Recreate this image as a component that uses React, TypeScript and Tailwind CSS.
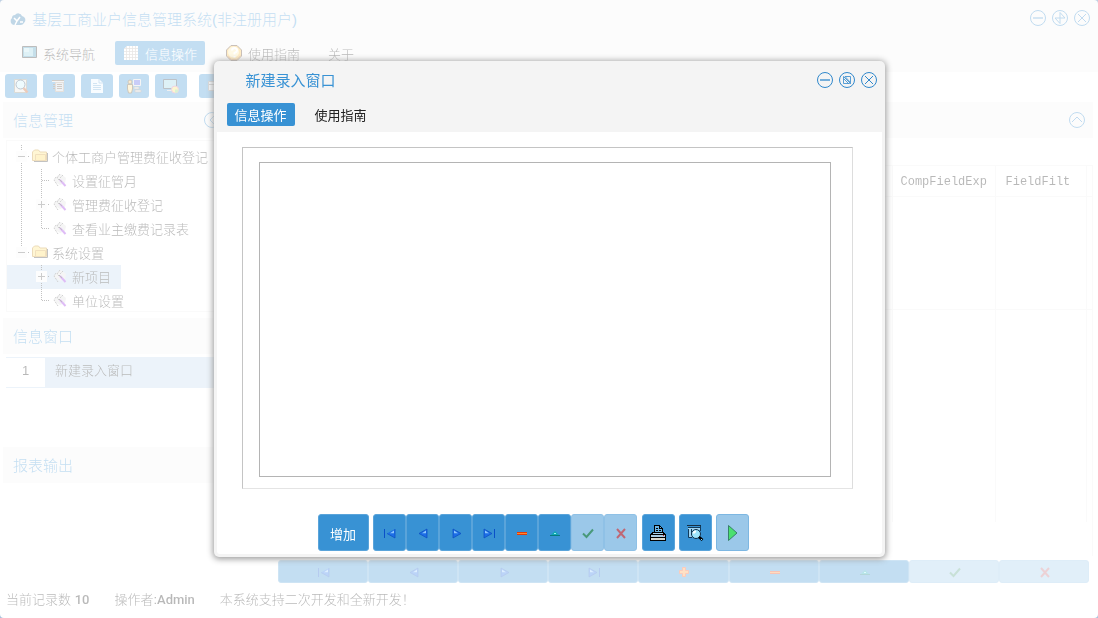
import { useState } from 'react'
import type { ReactNode } from 'react'
import clsx from 'clsx'

type NavKind = 'first' | 'prev' | 'next' | 'last' | 'insert' | 'delete' | 'edit' | 'post' | 'cancel'

const NAV_LABELS: Record<NavKind, string> = {
  first: '首记录',
  prev: '上一记录',
  next: '下一记录',
  last: '末记录',
  insert: '插入',
  delete: '删除',
  edit: '编辑',
  post: '提交',
  cancel: '取消',
}

const PAGE_NAV: NavKind[] = ['first', 'prev', 'next', 'last', 'insert', 'delete', 'edit', 'post', 'cancel']
const FORM_NAV: NavKind[] = ['first', 'prev', 'next', 'last', 'delete', 'edit', 'post', 'cancel']

function NavIcon({ kind }: { kind: NavKind }) {
  return (
    <svg width="16" height="16" viewBox="0 0 16 16" fill="none" aria-hidden="true">
      {kind === 'first' && <><path d="M2.500 4v9" stroke="#0a50c8" /><path d="M13 4v9L5 8.500z" fill="#1c6ee6" /><path d="M13 4v9L5 8.500" stroke="#0a4cc0" strokeWidth=".7" /><path d="M12 5.500L8 8.300h4z" fill="#8cc8ff" /></>}
      {kind === 'prev' && <><path d="M12 4v9L4 8.500z" fill="#1c6ee6" stroke="#0a4cc0" strokeWidth=".7" /><path d="M11 5.500L7 8.300h4z" fill="#8cc8ff" /></>}
      {kind === 'next' && <><path d="M5 4v9l8-4.500z" fill="#1c6ee6" stroke="#0a4cc0" strokeWidth=".7" /><path d="M6 5.500L10 8.300H6z" fill="#8cc8ff" /></>}
      {kind === 'last' && <><path d="M13.500 4v9" stroke="#0a50c8" /><path d="M3 4v9l8-4.500z" fill="#1c6ee6" stroke="#0a4cc0" strokeWidth=".7" /><path d="M4 5.500L8 8.300H4z" fill="#8cc8ff" /></>}
      {kind === 'insert' && <path d="M6.500 3.500h3v3h3v3h-3v3h-3v-3h-3v-3h3z" fill="#ff9a3c" stroke="#f2501e" />}
      {kind === 'delete' && <><path d="M3 7h10v3H3z" fill="#e03a0c" /><path d="M3 8h10v1H3z" fill="#ff8a2c" /></>}
      {kind === 'edit' && <><path d="M3 11l5-5 5 5z" fill="#10a8b4" /><path d="M3 10.500h10" stroke="#087a80" /><path d="M7 8h2v1H7z" fill="#9df2f2" /></>}
      {kind === 'post' && <path d="M3 8.500L6.500 12 13 4.500" stroke="#137a32" strokeWidth="2" />}
      {kind === 'cancel' && <path d="M4 4l8 9M12 4l-8 9" stroke="#d82828" strokeWidth="2" />}
    </svg>
  )
}

function Navigator({ kinds, className }: { kinds: NavKind[]; className: string }) {
  return (
    <>
      {kinds.map((kind) => {
        const disabled = kind === 'post' || kind === 'cancel'
        return (
          <button
            key={kind}
            type="button"
            aria-label={NAV_LABELS[kind]}
            disabled={disabled}
            className={clsx(
              'flex items-center justify-center rounded-[3px] border',
              disabled ? 'border-[#8fc1e6] bg-[#9bc8e9]' : 'border-[#5aa4da] bg-[#3892d4]',
              className,
            )}
          >
            <span className={clsx('pl-0.5', disabled && 'opacity-60')}><NavIcon kind={kind} /></span>
          </button>
        )
      })}
    </>
  )
}

function CircleButton({ label, children }: { label: string; children: ReactNode }) {
  return (
    <button type="button" aria-label={label} className="size-4 text-[#3088cc]">
      <svg width="16" height="16" viewBox="0 0 16 16" fill="none" stroke="currentColor" aria-hidden="true">
        <circle cx="8" cy="8" r="7.500" />
        {children}
      </svg>
    </button>
  )
}

function WindowControls({ middle }: { middle: ReactNode }) {
  return (
    <div className="flex gap-1.5">
      <CircleButton label="最小化"><path d="M3 8h10" strokeWidth="1.300" /></CircleButton>
      <CircleButton label="最大化">{middle}</CircleButton>
      <CircleButton label="关闭"><path d="M4 4l8 8M12 4l-8 8" /></CircleButton>
    </div>
  )
}

function MonitorIcon() {
  return (
    <svg width="16" height="16" viewBox="0 0 16 16" aria-hidden="true">
      <path d="M.5 1.500h14v11H.5z" fill="#3f95b8" stroke="#222" />
      <path d="M2 3h9v8H2z" fill="#8fcfe2" />
      <path d="M2 3h5v4H2z" fill="#b7e3ee" />
    </svg>
  )
}

function GridIcon() {
  return (
    <svg width="16" height="16" viewBox="0 0 16 16" aria-hidden="true">
      <path d="M4 1h11v14H1V4z" fill="#fff" />
      <path d="M1 3.500h14M1 6.500h14M1 9.500h14M1 12.500h14M3.500 1v14M6.500 1v14M9.500 1v14M12.500 1v14" stroke="#b4b0ac" strokeWidth=".8" />
    </svg>
  )
}

function HelpIcon() {
  return (
    <svg width="18" height="18" viewBox="0 0 18 18" aria-hidden="true">
      <path d="M6 1.500h6l4.500 4.500v6L12 16.500H6L1.500 12V6z" fill="#ffbe3c" stroke="#4a2c18" />
      <circle cx="8.500" cy="8" r="5.500" fill="#ffe9a8" />
      <path d="M7 6.500Q7 4 9.500 4T12 6.500Q12 8 9.500 9v1.500M9.500 12v1.500" fill="none" stroke="#fff" strokeWidth="2" />
      <path d="M3 12.500L6.500 15.500H12l3.500-4" fill="none" stroke="#d87818" />
    </svg>
  )
}

function FolderIcon() {
  return (
    <svg width="16" height="16" viewBox="0 0 16 16" aria-hidden="true">
      <path d="M.5 11.500V3l2-2h4L8 3h6.500v8.500z" fill="#ffe070" stroke="#c08818" />
      <path d="M3.500 5.500h10v6h-10z" fill="#ffd850" stroke="#d09828" />
      <path d="M15.500 4v8.500H2" fill="none" stroke="#333" />
    </svg>
  )
}

function FormIcon() {
  return (
    <svg width="16" height="16" viewBox="0 0 16 16" aria-hidden="true">
      <path d="M2 8l3-5 4-2 5 4-1 5-5 2z" fill="#ddd" />
      <path d="M4 4L2 7l4 6M8 1L5 5l3 3M11 2L8 5" fill="none" stroke="#666" strokeDasharray="2 1" />
      <path d="M8 7l5.500 6" stroke="#9320e0" strokeWidth="2" />
      <path d="M7 6l3 3" stroke="#333" />
    </svg>
  )
}

const TOOLS: { label: string; icon: ReactNode; narrow?: boolean }[] = [
  {
    label: '查询',
    icon: <><path d="M1.500 1.500h12v13h-12z" fill="#e8e4dc" stroke="#887" /><circle cx="7.500" cy="6.500" r="4.500" fill="#c9f0fa" stroke="#246" /><path d="M10.500 10l4 4.500" stroke="#c05018" strokeWidth="2.500" /></>,
  },
  {
    label: '目录',
    icon: <><path d="M1 2h12v2H1z" fill="#ddd" /><path d="M4.500 4.500h8v9h-8z" fill="#c8d4de" stroke="#a89888" /><path d="M1 2.500h12M6 6.500h5M6 8.500h5M6 10.500h5M2 6.500h2M2 8.500h2M2 10.500h2" stroke="#654" /></>,
  },
  {
    label: '文档',
    icon: <><path d="M2 1h8l4 4v10H2z" fill="#e8f4ff" /><path d="M10 1v4h4M4 5.500h4M4 7.500h8M4 9.500h8M4 11.500h8" fill="none" stroke="#69a7d5" /></>,
  },
  {
    label: '操作员',
    narrow: true,
    icon: <><path d="M7.500 1.500h7v6h-7z" fill="#4a58e8" stroke="#ddd" /><path d="M8 9h5v2H8zM9 12h6v2H9z" fill="#ddd" stroke="#777" strokeWidth=".7" /><circle cx="4" cy="4" r="2" fill="#f0b860" stroke="#542" /><path d="M1.500 6.500h5V11l-1 4h-3l-1-4z" fill="#ffdc88" stroke="#542" /></>,
  },
  {
    label: '显示设置',
    icon: <><path d="M.5 1.500h13v9H.5z" fill="#8fcfe2" stroke="#234" /><path d="M4 12.500h5" stroke="#ccc" /><circle cx="12" cy="11.500" r="3.500" fill="#f4e060" stroke="#d06a9a" /><path d="M12 11.500V15a3.500 3.500 0 003.500-3.500z" fill="#7fd070" /></>,
  },
]

const TREE = [
  { text: '个体工商户管理费征收登记', level: 0, sign: '-', last: false },
  { text: '设置征管月', level: 1, sign: '', last: false, trunk: true },
  { text: '管理费征收登记', level: 1, sign: '+', last: false, trunk: true },
  { text: '查看业主缴费记录表', level: 1, sign: '', last: true, trunk: true },
  { text: '系统设置', level: 0, sign: '-', last: true },
  { text: '新项目', level: 1, sign: '+', last: false },
  { text: '单位设置', level: 1, sign: '', last: true },
]

function Elbow({ last, sign }: { last: boolean; sign: string }) {
  return (
    <svg width="20" height="24" viewBox="0 0 20 24" fill="none" stroke="#333" aria-hidden="true">
      <path d={last ? 'M10.500 0v12' : 'M10.500 0v24'} strokeDasharray="1 1" />
      <path d="M11 11.500h8" strokeDasharray="1 1" />
      {sign && <path d="M5 6h11v11H5z" fill="#f7f7f7" stroke="none" />}
      {sign && <path d="M7 11.500h7" stroke="#555" />}
      {sign === '+' && <path d="M10.500 8v7" stroke="#555" />}
    </svg>
  )
}

function PanelHeader({ title, children }: { title?: string; children?: ReactNode }) {
  return (
    <div className="flex h-9 shrink-0 items-center justify-between bg-[#f5f5f5] pr-2 pl-2.5 text-[15px] text-[#3892d4]">
      <h2 className="pt-0.5">{title}</h2>
      {children}
    </div>
  )
}

function Sidebar({ selected, onSelect }: { selected: string; onSelect: (text: string) => void }) {
  return (
    <aside className="flex w-[225px] shrink-0 flex-col">
      <PanelHeader title="信息管理">
        <CircleButton label="收起"><path d="M10 4L6 8l4 4" /></CircleButton>
      </PanelHeader>
      <ul className="mx-[3px] mt-0.5 h-[172px] border border-[#eee] pt-1">
        {TREE.map((node) => (
          <li key={node.text} className="h-6">
            <button
              type="button"
              onClick={() => onSelect(node.text)}
              className={clsx('flex h-6 items-center pr-2.5 pl-1 whitespace-nowrap', selected === node.text && 'bg-[#c0d8ee]')}
            >
              {node.level === 1 && (
                <svg width="20" height="24" viewBox="0 0 20 24" aria-hidden="true">
                  {node.trunk && <path d="M10.500 0v24" stroke="#333" strokeDasharray="1 1" />}
                </svg>
              )}
              <Elbow last={node.last} sign={node.sign} />
              <span className="mr-1 ml-px">{node.level === 0 ? <FolderIcon /> : <FormIcon />}</span>
              <span className="pt-0.5">{node.text}</span>
            </button>
          </li>
        ))}
      </ul>
      <div className="mt-1.5">
        <PanelHeader title="信息窗口" />
      </div>
      <table className="mx-[3px] mt-[3px] mb-[59px] border-y border-[#c0d8ee]">
        <tbody>
          <tr className="h-[30px]">
            <td className="w-[39px] pb-1 text-center font-normal">1</td>
            <td className="bg-[#c0d8ee] pb-1 pl-2.5">新建录入窗口</td>
          </tr>
        </tbody>
      </table>
      <PanelHeader title="报表输出" />
    </aside>
  )
}

function FieldGrid() {
  return (
    <main className="ml-1 flex min-w-0 flex-1 flex-col">
      <PanelHeader>
        <CircleButton label="收起"><path d="M3 10l5-5 5 5" /></CircleButton>
      </PanelHeader>
      <div className="mt-[27px] ml-9 flex-1 border-r border-[#eee]">
        <table className="w-full table-fixed border-t border-[#eee] font-['Liberation_Mono','Noto_Sans_CJK_SC',monospace] text-xs">
          <thead>
            <tr className="h-[31px] border-b border-[#eee] text-left">
              <th />
              <th className="w-[103px] border-l border-[#eee] pt-0.5 pl-2 font-normal">CompFieldExp</th>
              <th className="w-[91px] border-x border-[#eee] pt-0.5 pl-2.5 font-normal">FieldFilt</th>
              <th className="w-1.5" />
            </tr>
          </thead>
          <tbody>
            <tr className="h-[113px] border-b border-[#eee]"><td /><td className="border-l border-[#eee]" /><td className="border-x border-[#eee]" /><td /></tr>
            <tr className="h-[212px]"><td /><td className="border-l border-[#eee]" /><td className="border-x border-[#eee]" /><td /></tr>
          </tbody>
        </table>
      </div>
      <div className="mt-1 mr-1 ml-[46px] flex h-[23px]">
        <Navigator kinds={PAGE_NAV} className="flex-1" />
      </div>
    </main>
  )
}

function EntryWindow() {
  const [tab, setTab] = useState('信息操作')
  return (
    <section
      role="dialog"
      aria-labelledby="entry-title"
      className="w-[61%] min-w-[671px] rounded-[5px] bg-[#f4f4f4] pb-[3px] shadow-[0_1px_6px_1px_#999]"
    >
      <header className="flex h-[37px] items-center justify-between pr-2 pl-8">
        <h2 id="entry-title" className="pt-1 text-[15px] font-normal text-[#3892d4]">新建录入窗口</h2>
        <WindowControls middle={<path d="M4.500 6.500v5h6M4.500 6.500l5 5M6 4.500h5.500v6M6 4.500l5.500 6M4.500 4.500l7 7M4.500 4.500v2M10.500 11.500h1v-1" strokeWidth=".8" />} />
      </header>
      <nav className="flex h-[34px] gap-3 px-[13px] pt-[5px]">
        {['信息操作', '使用指南'].map((name) => (
          <button
            key={name}
            type="button"
            onClick={() => setTab(name)}
            className={clsx('h-[23px] rounded-[2px] px-2 pt-0.5 font-normal', tab === name ? 'bg-[#3892d4] text-white' : 'text-[#222]')}
          >
            {name}
          </button>
        ))}
      </nav>
      <div className="mx-[3px] rounded-b-[3px] bg-white px-[25px] pt-[15px] pb-[3px]">
        <div className="mr-1 border border-[#c4c4c4] border-r-[#ddd] border-b-[#e4e4e4] pt-3.5 pr-[21px] pb-[11px] pl-4">
          <div className="h-[315px] border border-[#b4b4b4]" />
        </div>
        <div className="mt-[25px] flex h-[37px] justify-center pr-8">
          <button type="button" className="mr-1 w-[51px] rounded-[3px] border border-[#5aa4da] bg-[#3892d4] pt-1 text-[13px] font-normal text-white">增加</button>
          <Navigator kinds={FORM_NAV} className="w-[33px]" />
          <div className="ml-[5px] flex gap-1">
            <button type="button" aria-label="打印" className="flex w-[33px] items-center justify-center rounded-[3px] border border-[#5aa4da] bg-[#3892d4]">
              <svg width="18" height="18" viewBox="0 0 18 18" shapeRendering="crispEdges" aria-hidden="true">
                <path d="M5.500 8.500v-7h5l3 3v4" fill="#6ab4e4" stroke="#000" />
                <path d="M10.500 1.500v3h3M7 4.500h2M7 6.500h2M10 6.500h2" fill="none" stroke="#000" />
                <path d="M4 8.500h10l2 2H2z" fill="#a8d4f0" stroke="#000" />
                <path d="M1.500 10.500h15v3h-15z" fill="#a8cce4" stroke="#000" />
                <path d="M1.500 13.500h15v3h-15z" fill="#d8d8d0" stroke="#000" />
                <path d="M14 11h1v1h-1z" fill="#e02020" />
              </svg>
            </button>
            <button type="button" aria-label="预览" className="flex w-[33px] items-center justify-center rounded-[3px] border border-[#5aa4da] bg-[#3892d4]">
              <svg width="18" height="18" viewBox="0 0 18 18" aria-hidden="true">
                <path d="M1 1h14v1H1z" fill="#172e40" />
                <path d="M2 3h13v3h-2v2H6v5H3V5H2z" fill="#9fd4f2" />
                <path d="M2 3.500h12M2.500 5v8.500H6M5.500 5v6M14.500 2v5" fill="none" stroke="#123c5c" />
                <circle cx="10" cy="10" r="4.500" fill="#9fe6fc" stroke="#10304a" />
                <path d="M7.500 9.500Q8 7.500 10 7.500" fill="none" stroke="#fff" strokeWidth="2" />
                <path d="M13 13l3.500 3" stroke="#000" strokeWidth="2.500" />
                <path d="M15 15l1 1" stroke="#9ce8ff" />
              </svg>
            </button>
            <button type="button" aria-label="运行" disabled className="flex w-[33px] items-center justify-center rounded-[3px] border border-[#7db7e2] bg-[#9bc8e9]">
              <svg width="18" height="18" viewBox="0 0 18 18" aria-hidden="true">
                <path d="M5.500 1.500L14 9l-8.500 7.500z" fill="#4ae070" stroke="#37826a" />
              </svg>
            </button>
          </div>
        </div>
      </div>
    </section>
  )
}

export default function App() {
  const [selected, setSelected] = useState('新项目')

  return (
    <div className="relative min-h-screen bg-[#a9c0dc] font-['Liberation_Sans','Noto_Sans_CJK_SC',sans-serif] text-[13px] font-light text-[#111]">
      <div className="min-h-screen rounded-[4px] bg-white">
        <div className="flex min-h-screen flex-col opacity-30">
          <header className="h-[72px] shrink-0 bg-[#f5f5f5] pr-2 pl-2.5">
            <div className="flex h-9 items-center justify-between">
              <div className="flex items-center gap-1.5 pt-1">
                <svg width="16" height="16" viewBox="0 0 16 16" aria-hidden="true">
                  <path d="M4 13a4 4 0 01-2-7 3 3 0 013-3 4 4 0 017 1 4 4 0 012 7 4 4 0 01-4 2z" fill="#2e78ae" />
                  <path d="M4 6l3 3-2 4M10 5L7 9M10 10h3" fill="none" stroke="#fff" strokeWidth="1.500" />
                </svg>
                <h1 className="text-[15px] text-[#3892d4]">基层工商业户信息管理系统(非注册用户)</h1>
              </div>
              <WindowControls middle={<path d="M8 2.500v11L3 8h10L8 2.500" />} />
            </div>
            <nav className="flex h-[34px] items-center gap-3 pl-1">
              <button type="button" className="flex h-6 items-center gap-[5px] px-2"><MonitorIcon /><span className="pt-1">系统导航</span></button>
              <button type="button" className="flex h-6 items-center gap-1.5 rounded-[2px] bg-[#3892d4] px-2 text-white"><GridIcon /><span className="pt-1">信息操作</span></button>
              <button type="button" className="flex h-6 items-center gap-[5px] px-2"><HelpIcon /><span className="pt-1">使用指南</span></button>
              <button type="button" className="h-6 px-2 pt-1">关于</button>
            </nav>
          </header>
          <div className="flex h-[30px] shrink-0 items-center gap-1.5 pb-0.5 pl-[5px]">
            {TOOLS.map((tool) => (
              <button key={tool.label} type="button" aria-label={tool.label} className={clsx('flex h-6 items-center justify-center rounded-[3px] bg-[#3892d4]', tool.narrow ? 'w-[30px]' : 'w-8')}>
                <svg width="16" height="16" viewBox="0 0 16 16" fill="none" aria-hidden="true">{tool.icon}</svg>
              </button>
            ))}
            <button type="button" aria-label="窗口" className="ml-1.5 flex h-6 w-8 items-center justify-center rounded-[3px] bg-[#3892d4]">
              <svg width="16" height="16" viewBox="0 0 16 16" aria-hidden="true">
                <path d="M1.500 3.500h13v9h-13z" fill="#e6edf2" stroke="#888" />
                <path d="M2 6.500h12" stroke="#777" />
              </svg>
            </button>
          </div>
          <div className="flex flex-1 pr-[5px] pl-[3px]">
            <Sidebar selected={selected} onSelect={setSelected} />
            <FieldGrid />
          </div>
          <footer className="flex h-[35px] shrink-0 items-center gap-[25px] px-1.5 pb-0.5">
            <span>当前记录数 <span className="font-[Roboto] font-medium">10</span></span>
            <span>操作者:<span className="font-[Roboto] font-medium">Admin</span></span>
            <span>本系统支持二次开发和全新开发！</span>
          </footer>
        </div>
      </div>
      <div className="absolute inset-0 flex items-center justify-center">
        <EntryWindow />
      </div>
    </div>
  )
}
